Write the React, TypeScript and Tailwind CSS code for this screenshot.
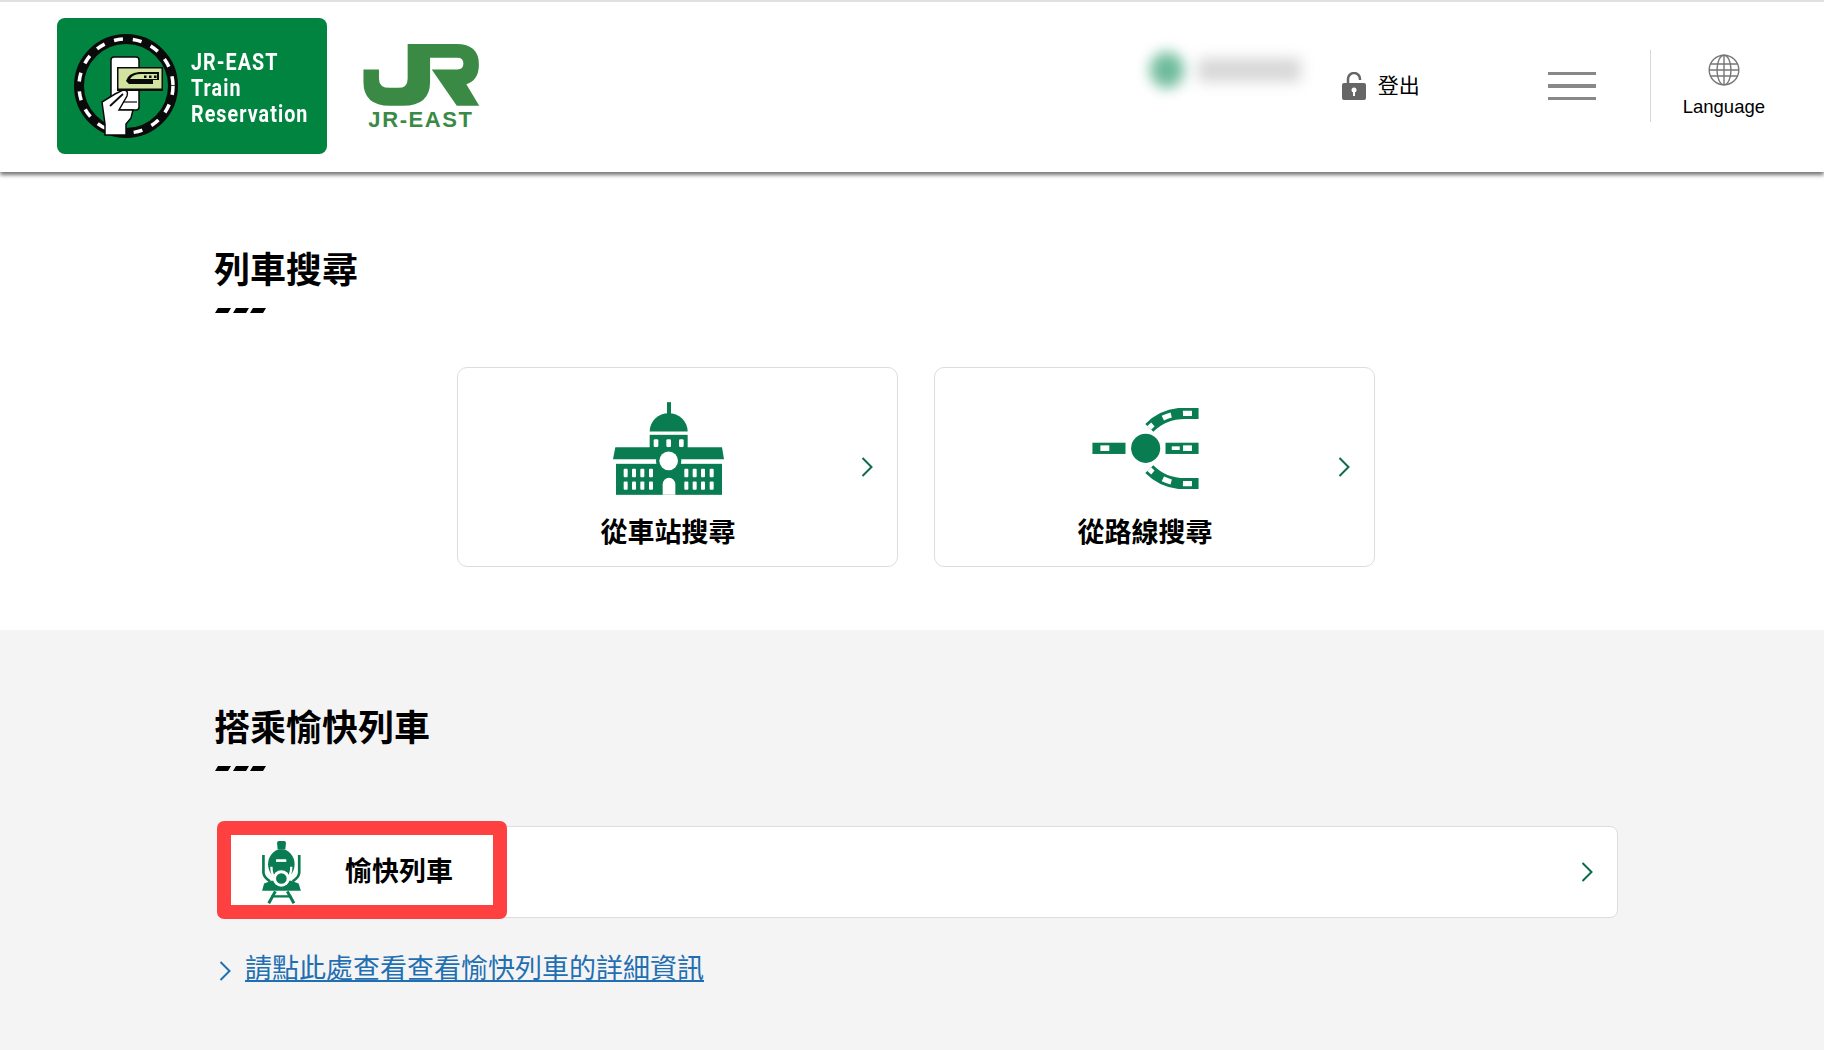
const GREEN = '#0a7c52';

function Chevron({ color = '#0b6b4f' }: { color?: string }) {
  return (
    <svg width="12" height="20" viewBox="0 0 12 20" fill="none">
      <polyline points="1.5,1 10.5,10 1.5,19" stroke={color} strokeWidth="2" />
    </svg>
  );
}

function Dashes() {
  return (
    <svg width="51" height="5" viewBox="0 0 51 5" className="mt-[17px] block">
      <polygon points="3,0 16,0 13,5 0,5" fill="#000" />
      <polygon points="21,0 34,0 31,5 18,5" fill="#000" />
      <polygon points="38,0 51,0 48,5 35,5" fill="#000" />
    </svg>
  );
}

function ServiceLogo() {
  return (
    <div className="flex h-[136px] w-[270px] items-center rounded-[8px] bg-[#00843f]">
      <svg width="134" height="136" viewBox="0 0 134 136" className="shrink-0">
        <circle cx="69" cy="68" r="47" fill="none" stroke="#0a0a0a" strokeWidth="10" />
        <circle cx="69" cy="68" r="47" fill="none" stroke="#fff" strokeWidth="3.5" strokeDasharray="9 10" />
        <rect x="54" y="39" width="28" height="53" rx="3" fill="#fff" stroke="#0a0a0a" strokeWidth="1.5" />
        <rect x="60" y="49" width="46" height="24" fill="#0a0a0a" />
        <rect x="61.5" y="50.5" width="43" height="20" fill="#d3e3a0" />
        <path d="M69 63 Q71 55 82 54 H102 V62 H96 V66 H72 Z" fill="#0a0a0a" />
        <path d="M73 61 Q76 56 84 56 H100 V61 Z" fill="#d3e3a0" />
        <rect x="87" y="57.5" width="2.5" height="2.5" fill="#0a0a0a" />
        <rect x="92" y="57.5" width="2.5" height="2.5" fill="#0a0a0a" />
        <rect x="97" y="57.5" width="2.5" height="2.5" fill="#0a0a0a" />
        <path d="M45 84 L58 76 L66 72 Q72 72 70 78 L62 92 H76 L74 100 L69 106 V117 H48 V106 Z" fill="#fff" stroke="#0a0a0a" strokeWidth="1.5" />
        <path d="M53 88 L66 76" stroke="#0a0a0a" strokeWidth="1.8" />
        <path d="M66 84 H80" stroke="#0a0a0a" strokeWidth="1.2" />
      </svg>
      <div className="mt-[3px] origin-left scale-x-[0.82] text-[24px] leading-[26px] font-bold tracking-[1.3px] whitespace-nowrap text-white [font-family:Roboto,sans-serif]">
        <div>JR-EAST</div>
        <div>Train</div>
        <div>Reservation</div>
      </div>
    </div>
  );
}

function JrLogo() {
  return (
    <div className="ml-[35px] flex h-[85px] w-[118px] flex-col items-center">
      <svg width="117" height="62" viewBox="0 0 352 188" className="block shrink-0">
        <path
          d="M0 77 H47 V105 Q47 133 80 133 H105 Q134 133 134 105 V0 H282 Q350 0 350 62 Q350 110 312 122 L351 187 H283 L207 77 H285 Q303 77 303 60 Q303 42 285 42 H202 V115 Q202 187 120 187 H80 Q0 187 0 115 Z"
          fill="#3a8a45"
        />
      </svg>
      <div className="mt-[5px] text-[22px] leading-[18px] font-bold tracking-[1.6px] whitespace-nowrap text-[#3a8a45]">JR-EAST</div>
    </div>
  );
}

function StationIcon() {
  const cols = [32, 57, 82, 108, 214, 239, 264, 290];
  return (
    <svg width="111" height="93" viewBox="0 0 333 278">
      <rect x="162" y="0" width="12" height="40" fill={GREEN} />
      <path d="M110 88 A57 55 0 0 1 224 88 Z" fill={GREEN} />
      <rect x="110" y="98" width="114" height="40" fill={GREEN} />
      {[122, 160, 198].map((x) => (
        <rect key={x} x={x} y="111" width="14" height="24" rx="4" fill="#fff" />
      ))}
      <polygon points="7,135 327,135 333,171 0,171" fill={GREEN} />
      <rect x="9" y="185" width="318" height="93" fill={GREEN} />
      <circle cx="167" cy="176" r="38" fill={GREEN} />
      <circle cx="167" cy="176" r="28" fill="#fff" />
      <path d="M149 278 V246 A18 18 0 0 1 187 246 V278 Z" fill="#fff" />
      {cols.map((x) => (
        <g key={x}>
          <rect x={x} y="200" width="12" height="25" rx="3" fill="#fff" />
          <rect x={x} y="238" width="12" height="25" rx="3" fill="#fff" />
        </g>
      ))}
    </svg>
  );
}

function RouteIcon() {
  const upper = 'M321 16 H280 Q215 16 172 60';
  const lower = 'M321 229 H280 Q215 229 172 185';
  return (
    <svg width="107" height="81" viewBox="0 0 321 245" fill="none">
      <circle cx="161" cy="122" r="44" fill={GREEN} />
      <rect x="0" y="105" width="100" height="34" fill={GREEN} />
      <rect x="24" y="113" width="27" height="17" fill="#fff" />
      <rect x="221" y="105" width="100" height="34" fill={GREEN} />
      <rect x="274" y="113" width="27" height="17" fill="#fff" />
      <rect x="240" y="116" width="24" height="11" fill="#fff" />
      <path d={upper} stroke={GREEN} strokeWidth="34" />
      <path d={lower} stroke={GREEN} strokeWidth="34" />
      <path d={upper} stroke="#fff" strokeWidth="16" strokeDasharray="27 36" strokeDashoffset="-20" />
      <path d={lower} stroke="#fff" strokeWidth="16" strokeDasharray="27 36" strokeDashoffset="-20" />
    </svg>
  );
}

function TrainIcon() {
  return (
    <svg width="42" height="63" viewBox="0 0 124 190" fill="none">
      <path d="M49 26 L47 6 Q47 0 53 0 H68 Q74 0 74 6 L72 26 Z" fill={GREEN} />
      <ellipse cx="60" cy="70" rx="40" ry="45" fill={GREEN} />
      <rect x="44" y="55" width="31" height="8" fill="#fff" />
      <path d="M30 78 Q30 104 44 116 M90 78 Q90 104 76 116" stroke="#fff" strokeWidth="7" />
      <path d="M6 42 V96 Q8 110 26 122 M114 42 V96 Q112 110 94 122" stroke={GREEN} strokeWidth="8" />
      <path d="M2 150 L8 128 L30 120 H90 L112 128 L119 150 Z" fill={GREEN} />
      <circle cx="60" cy="113" r="25" fill="#fff" />
      <circle cx="60" cy="113" r="16" fill={GREEN} />
      <path d="M42 152 L22 188 M78 152 L98 188" stroke={GREEN} strokeWidth="9" />
      <path d="M30 167 H90" stroke={GREEN} strokeWidth="7" />
    </svg>
  );
}

function SearchCard({ label, icon }: { label: string; icon: React.ReactNode }) {
  return (
    <div className="flex h-[200px] w-[441px] items-center rounded-[10px] border border-[#dddddd] bg-white">
      <div className="ml-[60px] flex h-full w-[300px] flex-col items-center pt-[34px]">
        <div className="flex h-[93px] items-center">{icon}</div>
        <div className="mt-[18px] text-[27px] leading-[40px] font-bold text-black">{label}</div>
      </div>
      <div className="mr-[24px] ml-auto flex">
        <Chevron />
      </div>
    </div>
  );
}

export default function App() {
  return (
    <div className="flex min-h-screen flex-col bg-[#f4f4f4] [font-family:'Liberation_Sans','Noto_Sans_CJK_TC',sans-serif]">
      {/* Header */}
      <header className="z-10 flex h-[172px] items-center border-t-2 border-[#e0e0e0] bg-white pr-[59px] pb-[2px] pl-[57px] shadow-[0_3px_4px_rgba(0,0,0,0.55)]">
        <ServiceLogo />
        <JrLogo />
        <div className="flex-1" />
        <div className="mb-[32px] flex items-center gap-[14px] blur-[7px]">
          <div className="h-[36px] w-[34px] rounded-full bg-[#6fbb9c]" />
          <div className="h-[24px] w-[103px] bg-[#d8d8d8]" />
        </div>
        <div className="ml-[41px] flex w-[206px] items-center gap-[12px]">
          <svg width="24" height="28" viewBox="0 0 24 28">
            <path d="M6 12 V7 A6 6 0 0 1 18 7 V8" fill="none" stroke="#666" strokeWidth="2.5" />
            <rect x="0" y="11" width="24" height="17" rx="2" fill="#666" />
            <circle cx="12" cy="18" r="2.5" fill="#fff" />
            <rect x="11" y="18" width="2" height="6" fill="#fff" />
          </svg>
          <span className="text-[21px] text-black">登出</span>
        </div>
        <div className="flex w-[48px] flex-col gap-[9px]">
          <div className="h-[3px] bg-[#888]" />
          <div className="h-[4px] bg-[#888]" />
          <div className="h-[3px] bg-[#888]" />
        </div>
        <div className="ml-[54px] h-[72px] w-px bg-[#d8d8d8]" />
        <div className="ml-[32px] flex flex-col items-center">
          <svg width="32" height="32" viewBox="0 0 32 32" fill="none" stroke="#777" strokeWidth="1.4">
            <circle cx="16" cy="16" r="14.8" />
            <ellipse cx="16" cy="16" rx="7" ry="14.8" />
            <path d="M16 1 V31 M2.5 10 H29.5 M2.5 22 H29.5 M1 16 H31" />
          </svg>
          <span className="mt-[9px] text-[18.5px] leading-[24px] text-black">Language</span>
        </div>
      </header>

      {/* Train search */}
      <section className="bg-white pt-[79px] pb-[63px] pl-[215px]">
        <h2 className="-ml-px text-[36px] leading-[40px] font-bold text-black">列車搜尋</h2>
        <Dashes />
        <div className="mt-[54px] ml-[242px] flex gap-[36px]">
          <SearchCard label="從車站搜尋" icon={<StationIcon />} />
          <SearchCard label="從路線搜尋" icon={<RouteIcon />} />
        </div>
      </section>

      {/* Joyful trains */}
      <section className="flex-1 pt-[79px] pl-[215px]">
        <h2 className="-ml-px text-[36px] leading-[40px] font-bold text-black">搭乘愉快列車</h2>
        <Dashes />
        <div className="relative mt-[55px] ml-[2px] flex h-[92px] w-[1401px] items-center rounded-[8px] border border-[#dddddd] bg-white">
          <div className="ml-[43px] flex">
            <TrainIcon />
          </div>
          <span className="ml-[42px] text-[27px] leading-[40px] font-bold text-black">愉快列車</span>
          <div className="mr-[24px] ml-auto flex">
            <Chevron />
          </div>
          <div className="absolute top-[-6px] left-[-1px] h-[98px] w-[290px] rounded-[7px] border-[14px] border-[#ff4040]" />
        </div>
        <div className="mt-[31px] ml-[4px] flex items-center gap-[14px]">
          <div className="mt-[4px] flex">
            <Chevron color="#1f6fb2" />
          </div>
          <a className="text-[27px] leading-[40px] text-[#1f6fb2] underline">請點此處查看查看愉快列車的詳細資訊</a>
        </div>
      </section>
    </div>
  );
}
